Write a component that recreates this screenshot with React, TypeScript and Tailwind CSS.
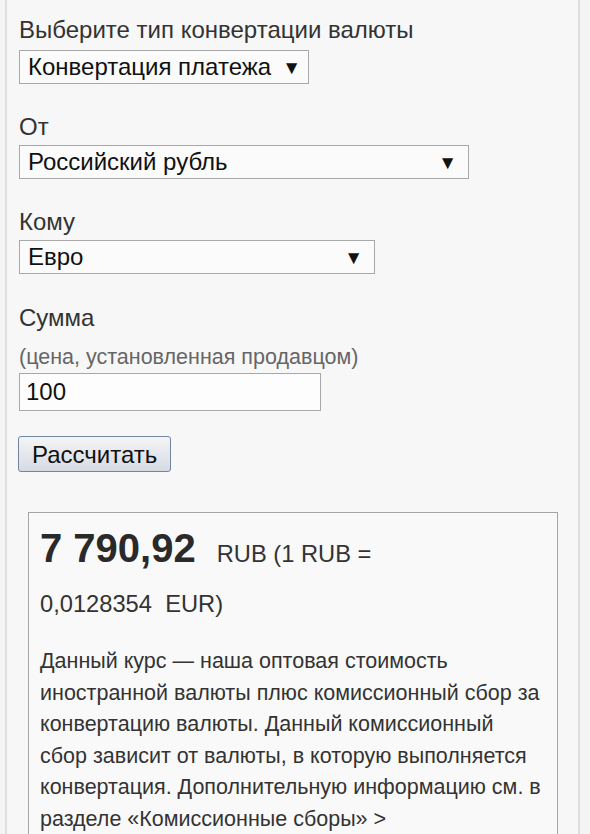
import React from 'react';

const Arrow = () => <span className="text-[19px] leading-none text-[#111]">▼</span>;

interface FakeSelectProps {
  value: string;
  width: string;
  gap?: boolean;
}

const FakeSelect: React.FC<FakeSelectProps> = ({ value, width, gap }) => (
  <div
    className={`flex h-[34px] items-center whitespace-nowrap border border-[#a8a8a8] bg-[#fbfbfb] pl-[8px] pr-[11px] ${width} ${
      gap ? 'gap-[11px]' : 'justify-between'
    }`}
  >
    <span className="text-[24px] text-[#111]">{value}</span>
    <Arrow />
  </div>
);

export default function App() {
  return (
    <div
      className="min-h-[834px] bg-[#f4f4f4] pl-[5px] pr-[10px]"
      style={{ fontFamily: '"Liberation Sans", Arial, sans-serif' }}
    >
      <div className="h-[834px] overflow-hidden border-x-2 border-[#dedede] bg-[#f7f7f7] pl-[12px] pr-[10px] pt-[14px] text-[#222]">
        <div className="text-[24px] leading-[32px] text-[#333]">Выберите тип конвертации валюты</div>
        <div className="mt-[4px]">
          <FakeSelect value="Конвертация платежа" width="w-[290px]" gap />
        </div>

        <div className="mt-[27px] text-[24px] leading-[32px] text-[#333]">От</div>
        <div className="mt-[2px]">
          <FakeSelect value="Российский рубль" width="w-[450px]" />
        </div>

        <div className="mt-[27px] text-[24px] leading-[32px] text-[#333]">Кому</div>
        <div className="mt-[2px]">
          <FakeSelect value="Евро" width="w-[356px]" />
        </div>

        <div className="mt-[28px] text-[24px] leading-[32px] text-[#333]">Сумма</div>
        <div className="mt-[9px] text-[21.5px] leading-[28px] text-[#666]">(цена, установленная продавцом)</div>
        <div className="mt-[2px] flex h-[38px] w-[302px] items-center border border-[#a8a8a8] bg-[#fdfdfd] px-[6px] text-[24px] text-[#111]">
          100
        </div>

        <button className="mt-[25px] ml-[-1px] h-[36px] rounded-[3px] border border-[#7184a0] bg-gradient-to-b from-[#f4f4f4] to-[#d6dbe4] px-[13px] text-[24px] text-[#111]">
          Рассчитать
        </button>

        <div className="mt-[40px] ml-[9px] mr-[10px] border border-[#a5a5a5] bg-[#f9f9f9] pl-[11px] pr-[11px] pt-[10px] pb-[20px]">
          <div className="text-[23.7px] leading-[50px] text-[#333]">
            <span className="mr-[21px] text-[40px] font-bold text-[#2a2a2a]">7 790,92</span>
            RUB (1 RUB = <span className="whitespace-nowrap">0,0128354&nbsp; EUR)</span>
          </div>
          <p className="mt-[17px] text-[21.5px] leading-[31.6px] text-[#333]">
            Данный курс — наша оптовая стоимость иностранной валюты плюс комиссионный сбор за конвертацию
            валюты. Данный комиссионный сбор зависит от валюты, в которую выполняется конвертация. Дополнительную
            информацию см. в разделе «Комиссионные сборы» &gt;
          </p>
        </div>
      </div>
    </div>
  );
}
